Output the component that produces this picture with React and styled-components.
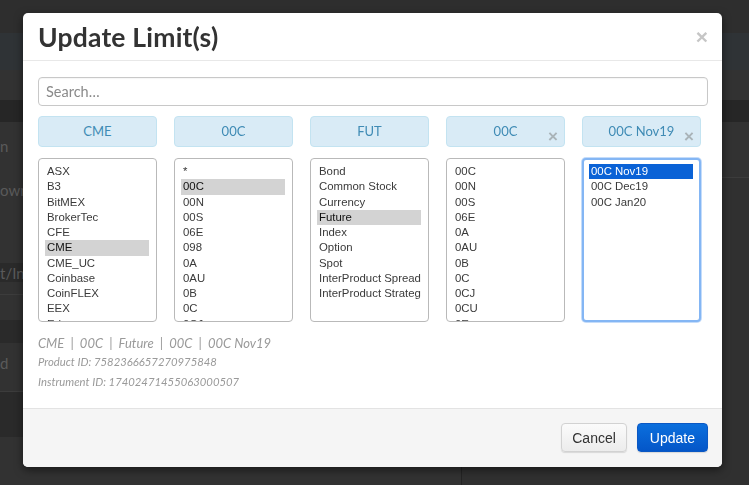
import React, { useState } from "react";
import styled, { createGlobalStyle } from "styled-components";

const GlobalStyle = createGlobalStyle`
  html, body {
    margin: 0;
    padding: 0;
    background: #303030;
  }
  * {
    box-sizing: border-box;
  }
`;

const columns = [
  {
    tag: "CME",
    removable: false,
    items: ["ASX", "B3", "BitMEX", "BrokerTec", "CFE", "CME", "CME_UC", "Coinbase", "CoinFLEX", "EEX", "Eris"],
    selected: "CME",
  },
  {
    tag: "00C",
    removable: false,
    items: ["*", "00C", "00N", "00S", "06E", "098", "0A", "0AU", "0B", "0C", "0CJ"],
    selected: "00C",
  },
  {
    tag: "FUT",
    removable: false,
    items: ["Bond", "Common Stock", "Currency", "Future", "Index", "Option", "Spot", "InterProduct Spread", "InterProduct Strategy"],
    selected: "Future",
  },
  {
    tag: "00C",
    removable: true,
    items: ["00C", "00N", "00S", "06E", "0A", "0AU", "0B", "0C", "0CJ", "0CU", "0E"],
    selected: null,
  },
  {
    tag: "00C Nov19",
    removable: true,
    items: ["00C Nov19", "00C Dec19", "00C Jan20"],
    selected: "00C Nov19",
    focused: true,
  },
];

export default function App() {
  const [search, setSearch] = useState("");

  return (
    <>
      <GlobalStyle />
      <Page>
        <TopBar />
        <NavStrip />
        <Band tone="#323232" height={30} />
        <Band tone="#262626" height={22} />
        <Body>
          <LeftPane>
            <Band tone="#323232" height={48}>n</Band>
            <Band tone="#323232" height={40}>own</Band>
            <Band tone="#323232" height={53} />
            <Band tone="#2a2a2a" height={19}>t/In</Band>
            <Band tone="#323232" height={13} line />
            <Band tone="#323232" height={25} />
            <Band tone="#2a2a2a" height={23} />
            <Band tone="#323232" height={40}>d</Band>
            <Band tone="#323232" height={9} line />
            <Band tone="#2a2a2a" height={45} />
            <Band tone="#323232" height={48} />
          </LeftPane>
          <RightPane>
            <Band tone="#323232" height={56} line />
          </RightPane>
        </Body>
      </Page>

      <Overlay>
        <Modal>
          <Header>
            <Title>Update Limit(s)</Title>
            <Close>×</Close>
          </Header>

          <Content>
            <Search
              placeholder="Search…"
              value={search}
              onChange={(e) => setSearch(e.target.value)}
            />

            <Columns>
              {columns.map((col, i) => (
                <Tag key={"t" + i}>
                  {col.tag}
                  {col.removable && <TagRemove>×</TagRemove>}
                </Tag>
              ))}
              {columns.map((col, i) => (
                <ListBox key={"l" + i} focused={col.focused}>
                  {col.items.map((item) => (
                    <Option
                      key={item}
                      state={
                        item === col.selected
                          ? col.focused
                            ? "active"
                            : "selected"
                          : "none"
                      }
                    >
                      {item}
                    </Option>
                  ))}
                </ListBox>
              ))}
            </Columns>

            <Info>
              <Path>CME &nbsp;|&nbsp; 00C &nbsp;|&nbsp; Future &nbsp;|&nbsp; 00C &nbsp;|&nbsp; 00C Nov19</Path>
              <IdLine>Product ID: 7582366657270975848</IdLine>
              <IdLine>Instrument ID: 17402471455063000507</IdLine>
            </Info>
          </Content>

          <Footer>
            <Button>Cancel</Button>
            <Button primary>Update</Button>
          </Footer>
        </Modal>
      </Overlay>
    </>
  );
}

const Page = styled.div`
  height: 485px;
  display: flex;
  flex-direction: column;
  background: #303030;
  overflow: hidden;
`;

const TopBar = styled.div`
  height: 33px;
  background: #2e2e2e;
`;

const NavStrip = styled.div`
  height: 37px;
  background: #2f3336;
`;

const Band = styled.div`
  height: ${(p) => p.height}px;
  flex-shrink: 0;
  background: ${(p) => p.tone};
  border-bottom: ${(p) => (p.line ? "1px solid #3c3c3c" : "none")};
  color: #5a5a5a;
  font-family: "Lato", "Liberation Sans", sans-serif;
  font-size: 15px;
  display: flex;
  align-items: center;
  padding-left: 0;
  white-space: nowrap;
`;

const Body = styled.div`
  flex: 1;
  display: flex;
`;

const LeftPane = styled.div`
  width: 462px;
  display: flex;
  flex-direction: column;
  border-right: 1px solid #242424;
`;

const RightPane = styled.div`
  flex: 1;
  display: flex;
  flex-direction: column;
`;

const Overlay = styled.div`
  position: fixed;
  inset: 0;
  padding: 13px 0 0 23px;
`;

const Modal = styled.div`
  width: 699px;
  height: 454px;
  background: #fff;
  border-radius: 5px;
  box-shadow: 0 3px 9px rgba(0, 0, 0, 0.5);
  display: flex;
  flex-direction: column;
  overflow: hidden;
`;

const Header = styled.div`
  height: 48px;
  display: flex;
  align-items: center;
  justify-content: space-between;
  padding: 0 14px 0 15px;
  border-bottom: 1px solid #e8e8e8;
`;

const Title = styled.h3`
  margin: 0;
  padding-top: 1px;
  font-family: "Lato", "Liberation Sans", sans-serif;
  font-weight: 700;
  font-size: 26.5px;
  color: #333;
  letter-spacing: 0.2px;
`;

const Close = styled.span`
  font-family: "Liberation Sans", sans-serif;
  font-size: 21px;
  font-weight: 700;
  color: #c6c6c6;
  line-height: 1;
  margin-top: 0;
`;

const Content = styled.div`
  flex: 1;
  padding: 16px 14px 0 15px;
  display: flex;
  flex-direction: column;
`;

const Search = styled.input`
  width: 100%;
  height: 29px;
  border: 1px solid #c8c8c8;
  border-radius: 4px;
  padding: 0 7px;
  font-family: "Lato", "Liberation Sans", sans-serif;
  font-size: 14.5px;
  color: #333;
  outline: none;
  box-shadow: inset 0 1px 1px rgba(0, 0, 0, 0.04);
  &::placeholder {
    color: #8a8a8a;
  }
`;

const Columns = styled.div`
  margin-top: 10px;
  display: grid;
  grid-template-columns: repeat(5, 119px);
  grid-template-rows: 31px 164px;
  column-gap: 17px;
  row-gap: 11px;
`;

const Tag = styled.div`
  position: relative;
  background: #d9ebf6;
  border: 1px solid #c3e3f1;
  border-radius: 4px;
  color: #3f8bb5;
  font-family: "Lato", "Liberation Sans", sans-serif;
  font-size: 13px;
  display: flex;
  align-items: center;
  justify-content: center;
  padding-bottom: 2px;
`;

const TagRemove = styled.span`
  position: absolute;
  right: 6px;
  bottom: 1px;
  font-family: "Liberation Sans", sans-serif;
  font-size: 17px;
  font-weight: 700;
  color: #a9b3b8;
  line-height: 1;
`;

const ListBox = styled.div`
  border: ${(p) => (p.focused ? "2px solid #84b6f4" : "1px solid #b9b9b9")};
  box-shadow: ${(p) => (p.focused ? "0 0 0 1px #c4dcfa" : "none")};
  border-radius: 4px;
  padding: ${(p) => (p.focused ? "4px 6px 0 5px" : "5px 7px 0 6px")};
  overflow: hidden;
  background: #fff;
`;

const Option = styled.div`
  height: 15.25px;
  line-height: 15.25px;
  padding-left: 2px;
  font-family: "Liberation Sans", Arial, sans-serif;
  font-size: 11.4px;
  white-space: nowrap;
  overflow: hidden;
  color: ${(p) =>
    p.state === "active" ? "#fff" : p.state === "selected" ? "#111" : "#3a3a3a"};
  background: ${(p) =>
    p.state === "active" ? "#0a62d6" : p.state === "selected" ? "#d3d3d3" : "transparent"};
`;

const Info = styled.div`
  margin-top: 13px;
  font-family: "Lato", "Liberation Sans", sans-serif;
  font-style: italic;
  color: #9a9a9a;
`;

const Path = styled.div`
  font-size: 13px;
  line-height: 17px;
`;

const IdLine = styled.div`
  font-size: 11.3px;
  line-height: 14px;
  margin-top: 3px;
  & + & {
    margin-top: 6px;
  }
`;

const Footer = styled.div`
  height: 59px;
  background: #f5f5f5;
  border-top: 1px solid #e3e3e3;
  display: flex;
  align-items: center;
  justify-content: flex-end;
  gap: 10px;
  padding: 0 14px 1px 0;
`;

const Button = styled.button`
  height: 29px;
  padding: 0 ${(p) => (p.primary ? "12px" : "10px")};
  border-radius: 4px;
  font-family: "Liberation Sans", Arial, sans-serif;
  font-size: 14px;
  cursor: pointer;
  color: ${(p) => (p.primary ? "#fff" : "#333")};
  border: 1px solid ${(p) => (p.primary ? "#0b58c4" : "#d2d2d2")};
  background: ${(p) =>
    p.primary
      ? "linear-gradient(to bottom, #0b6fdd, #0456c8)"
      : "linear-gradient(to bottom, #fbfbfb, #ececec)"};
  box-shadow: 0 1px 1px rgba(0, 0, 0, 0.12);
`;
